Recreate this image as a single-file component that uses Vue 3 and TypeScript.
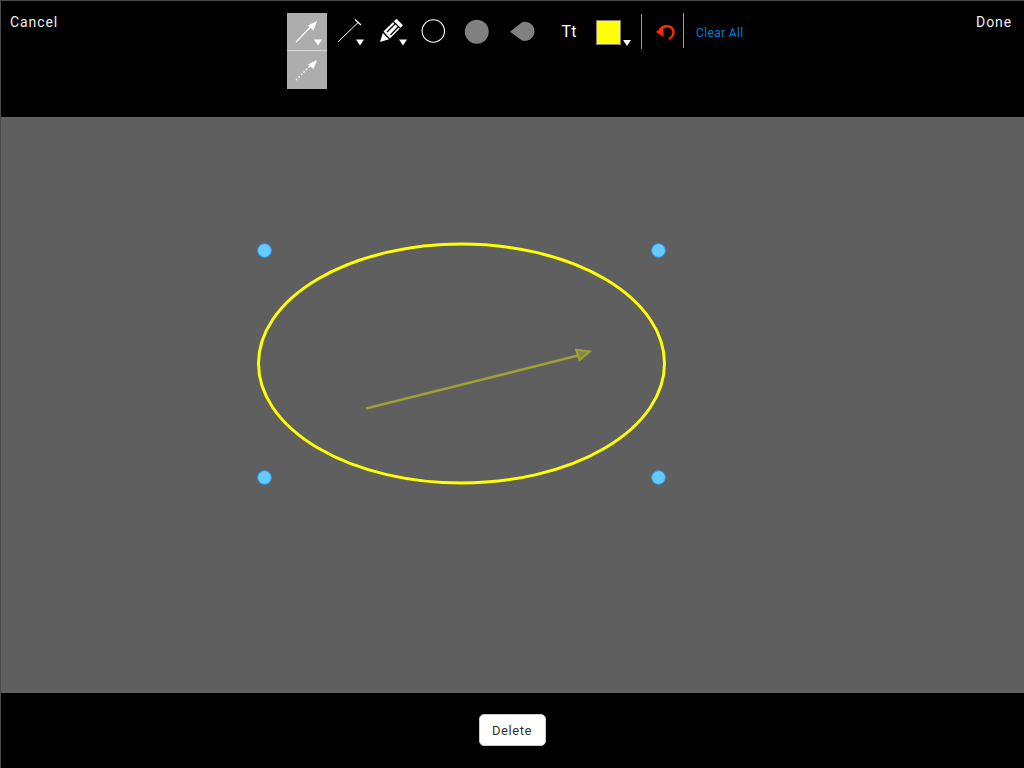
<script setup lang="ts">
const handles: [number, number][] = [[264.5, 250.5], [658.5, 250.5], [264.5, 477.5], [658.5, 477.5]]
</script>

<template>
  <div class="screen">
    <header class="top">
      <div class="left"><span class="link">Cancel</span></div>
      <div class="tools">
        <div class="stack">
          <svg class="cell" width="40" height="37" viewBox="287 13 40 37">
            <path d="M296 42 L311 26.5" stroke="#fff" stroke-width="1.1" />
            <path d="M317 21 L308 25.5 L313.5 30.5 Z" fill="#fff" />
            <path d="M314 39.6 H322 L318 45.6 Z" fill="#fff" />
          </svg>
          <svg class="cell second" width="40" height="38" viewBox="287 51 40 38">
            <path d="M296 80 L311 65" stroke="#fff" stroke-width="1.2" stroke-dasharray="2 1.5" />
            <path d="M317 60 L308 64.5 L313.5 69 Z" fill="#fff" />
          </svg>
        </div>
        <svg class="icon" width="44" height="36" viewBox="327 13 44 36">
          <path d="M338 42 L358.4 22.2" stroke="#fff" stroke-width="1" />
          <path d="M355 19.5 L361 25" stroke="#fff" stroke-width="1.2" />
          <path d="M356 39.6 H364 L360 45.6 Z" fill="#fff" />
        </svg>
        <svg class="icon" width="40" height="36" viewBox="371 13 40 36">
          <path d="M380 42 L382.8 33 L389 39.3 Z" fill="#fff" />
          <path d="M383.5 31.5 L396.5 18.8 L403 25.2 L390 38.5 Z" fill="#fff" />
          <path d="M393.5 21.8 L400 28.2" stroke="#000" stroke-width="1.2" />
          <path d="M387 32 L395.5 23.5 M390.5 35 L398.5 26.7" stroke="#000" stroke-width="1.3" />
          <path d="M399 39.6 H407 L403 45.6 Z" fill="#fff" />
        </svg>
        <svg class="icon" width="44" height="36" viewBox="411 13 44 36">
          <circle cx="433.3" cy="31" r="11.2" fill="none" stroke="#fff" stroke-width="1.1" />
        </svg>
        <svg class="icon" width="44" height="36" viewBox="455 13 44 36">
          <circle cx="476.8" cy="31.7" r="12" fill="#808080" />
        </svg>
        <svg class="icon" width="48" height="36" viewBox="499 13 48 36">
          <path d="M510 31.7 L522 22.2 C528.5 20.4 534.5 25 534.5 31.2 C534.5 37.5 528.5 42.2 522 40.4 Z" fill="#808080" />
        </svg>
        <div class="tt">Tt</div>
        <div class="color">
          <span class="swatch"></span>
          <svg class="caret" width="8" height="6" viewBox="0 0 8 6"><path d="M0 0 H8 L4 6 Z" fill="#fff" /></svg>
        </div>
        <span class="rule first"></span>
        <svg class="undo" width="26" height="24" viewBox="652 20 26 24">
          <path d="M660 29.5 C663 25.4 670 25 672.6 29 C675 33 672.6 37.4 668.8 39" fill="none" stroke="#ff2a00" stroke-width="2.4" />
          <path d="M656 32 L663.4 25.4 L663.6 37 Z" fill="#ff2a00" />
        </svg>
        <span class="rule second-rule"></span>
        <span class="clear">Clear All</span>
      </div>
      <div class="right"><span class="link">Done</span></div>
    </header>

    <main class="canvas">
      <svg class="drawing" width="1024" height="576" viewBox="0 117 1024 576">
        <ellipse cx="461.5" cy="363.5" rx="203" ry="119.5" fill="none" stroke="#ffff00" stroke-width="3" />
        <g opacity="0.4">
          <path d="M366 408.6 L578 355.6" stroke="#ffff00" stroke-width="2.6" />
          <path d="M576 349.8 L590 351.4 L579.6 360 Z" fill="#ffff00" fill-opacity="0.6" stroke="#ffff00" stroke-width="2" />
        </g>
        <circle v-for="(h, i) in handles" :key="i" :cx="h[0]" :cy="h[1]" r="6.8" fill="#66c9ff" stroke="#2f9fff" stroke-width="1" />
      </svg>
    </main>

    <footer class="bottom">
      <button class="delete" type="button">Delete</button>
    </footer>
  </div>
</template>

<style>
html, body { margin: 0; background: #000; }
</style>

<style scoped>
.screen {
  width: 1024px;
  height: 768px;
  box-sizing: border-box;
  display: flex;
  flex-direction: column;
  background: #000;
  border-top: 1px solid #4a4a4a;
  border-left: 1px solid #4a4a4a;
  font-family: Roboto, "Liberation Sans", sans-serif;
  overflow: hidden;
}
.top {
  flex: 0 0 116px;
  display: flex;
  align-items: flex-start;
}
.left { flex: 0 0 286px; padding: 12px 0 0 9px; box-sizing: border-box; }
.right { margin-left: auto; padding: 12px 12px 0 0; }
.link { color: #eee; font-size: 14px; line-height: 18px; letter-spacing: 0.9px; font-weight: 400; display: block; }
.tools { display: flex; align-items: flex-start; padding-top: 12px; }
.stack { width: 40px; background: #adadad; display: flex; flex-direction: column; }
.cell { display: block; }
.second { border-top: 1px solid #d8d8d8; }
.icon { display: block; flex: none; }
.tt {
  flex: 0 0 44px;
  height: 36px;
  line-height: 38px;
  text-align: center;
  color: #fff;
  font-size: 16px;
  font-weight: 400;
}
.color { flex: 0 0 50px; height: 36px; display: flex; position: relative; padding-left: 5px; box-sizing: border-box; }
.swatch {
  display: block;
  width: 25px;
  height: 25px;
  margin-top: 7px;
  box-sizing: border-box;
  background: #ffff00;
  border: 1px solid #808080;
}
.caret { display: block; margin: 27px 0 0 2px; }
.rule { display: block; width: 1px; background: #9a9a9a; height: 35px; flex: none; }
.first { margin-top: 1px; }
.undo { display: block; flex: none; margin: 7px 5px 0 10px; }
.clear { color: #007fdc; font-size: 12px; line-height: 16px; margin: 12px 0 0 12px; letter-spacing: 0.35px; white-space: nowrap; font-weight: 400; }
.canvas { flex: 0 0 576px; background: #5f5f5f; position: relative; }
.drawing { position: absolute; left: -1px; top: 0; display: block; }
.bottom { flex: 1; display: flex; align-items: flex-start; justify-content: center; padding: 21px 1px 0 0; }
.delete {
  width: 67px;
  height: 32px;
  padding: 0;
  background: #fff;
  border: 1px solid #c8c8c8;
  border-radius: 5px;
  color: #333;
  font-family: Roboto, "Liberation Sans", sans-serif;
  font-size: 13px;
  letter-spacing: 0.6px;
}
</style>
